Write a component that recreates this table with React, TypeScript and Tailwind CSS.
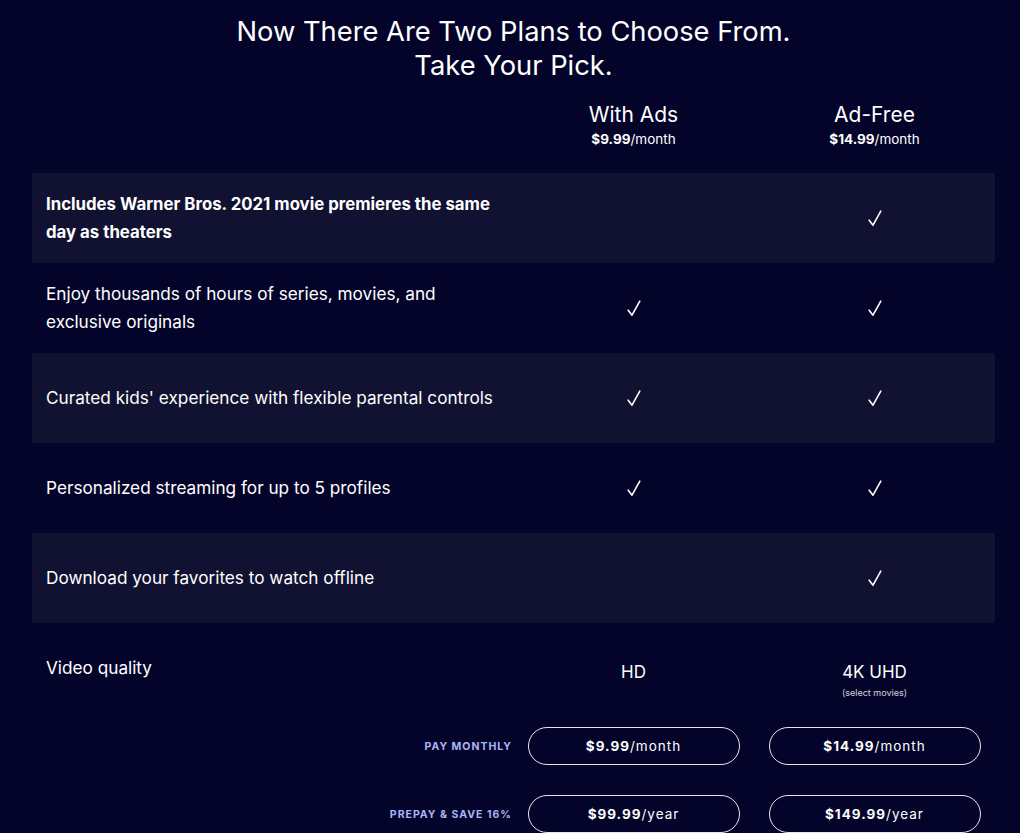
import React from "react";

const font = { fontFamily: "Inter, 'Noto Sans', sans-serif" };

const rows: { text: string; bold?: boolean; ads: boolean; free: boolean }[] = [
  { text: "Includes Warner Bros. 2021 movie premieres the same day as theaters", bold: true, ads: false, free: true },
  { text: "Enjoy thousands of hours of series, movies, and exclusive originals", ads: true, free: true },
  { text: "Curated kids' experience with flexible parental controls", ads: true, free: true },
  { text: "Personalized streaming for up to 5 profiles", ads: true, free: true },
  { text: "Download your favorites to watch offline", ads: false, free: true },
];

function Check() {
  return (
    <svg width="14" height="17" viewBox="0 0 14 17" fill="none" className="block">
      <path d="M1.2 10.2 L5 15.2 L12.8 1.2" stroke="white" strokeWidth="1.6" strokeLinecap="round" strokeLinejoin="round" />
    </svg>
  );
}

function PriceButton({ price, unit }: { price: string; unit: string }) {
  return (
    <button className="w-[212px] h-[38px] rounded-full border border-white/90 flex items-center justify-center text-[13.5px] tracking-[1px] text-white">
      <span className="font-bold">{price}</span>
      <span>/{unit}</span>
    </button>
  );
}

export default function App() {
  return (
    <div className="min-h-screen w-full bg-[#04042a] text-white" style={font}>
      <div className="w-[1020px] pl-[32px] pr-[25px] pb-10">
        <h1 className="pt-[15px] text-center text-[27.3px] leading-[34px] font-normal">
          Now There Are Two Plans to Choose From.
          <br />
          Take Your Pick.
        </h1>
        <div className="grid grid-cols-[481px_241px_241px] mt-[18px] mb-[25px]">
          <div />
          <div className="flex flex-col items-center">
            <div className="text-[21px] leading-[28px]">With Ads</div>
            <div className="text-[13.5px] leading-[18px] mt-[1px]">
              <span className="font-bold">$9.99</span>/month
            </div>
          </div>
          <div className="flex flex-col items-center">
            <div className="text-[21px] leading-[28px]">Ad-Free</div>
            <div className="text-[13.5px] leading-[18px] mt-[1px]">
              <span className="font-bold">$14.99</span>/month
            </div>
          </div>
        </div>
        <div className="flex flex-col">
          {rows.map((r, i) => (
            <div
              key={i}
              className={`grid grid-cols-[481px_241px_241px] h-[90px] items-center ${i % 2 === 0 ? "bg-[#111232]" : ""}`}
            >
              <div className={`pl-[14px] pr-[10px] leading-[28px] ${r.bold ? "font-bold text-[16.8px]" : "text-[17.2px]"}`}>
                <div className="max-w-[460px]">{r.text}</div>
              </div>
              <div className="flex justify-center">{r.ads && <Check />}</div>
              <div className="flex justify-center">{r.free && <Check />}</div>
            </div>
          ))}
          <div className="grid grid-cols-[481px_241px_241px] pt-[31px] h-[90px] items-start">
            <div className="pl-[14px] text-[17.2px] leading-[28px]">Video quality</div>
            <div className="flex justify-center pt-[5px] text-[17px] leading-[26px]">HD</div>
            <div className="flex flex-col items-center pt-[5px]">
              <div className="text-[17px] leading-[26px]">4K UHD</div>
              <div className="text-[9px] leading-[12px] mt-[2px] text-white/80">(select movies)</div>
            </div>
          </div>
        </div>
        <div className="flex flex-col gap-[30px] mt-[14px]">
          <div className="grid grid-cols-[481px_241px_241px] items-center">
            <div className="text-right pr-[1px] pt-[2px] text-[10.5px] font-bold tracking-[1px] text-[#a9b6f6]">PAY MONTHLY</div>
            <div className="flex justify-center"><PriceButton price="$9.99" unit="month" /></div>
            <div className="flex justify-center"><PriceButton price="$14.99" unit="month" /></div>
          </div>
          <div className="grid grid-cols-[481px_241px_241px] items-center">
            <div className="text-right pr-[1px] pt-[2px] text-[10.5px] font-bold tracking-[1px] text-[#a9b6f6]">PREPAY &amp; SAVE 16%</div>
            <div className="flex justify-center"><PriceButton price="$99.99" unit="year" /></div>
            <div className="flex justify-center"><PriceButton price="$149.99" unit="year" /></div>
          </div>
        </div>
      </div>
    </div>
  );
}
